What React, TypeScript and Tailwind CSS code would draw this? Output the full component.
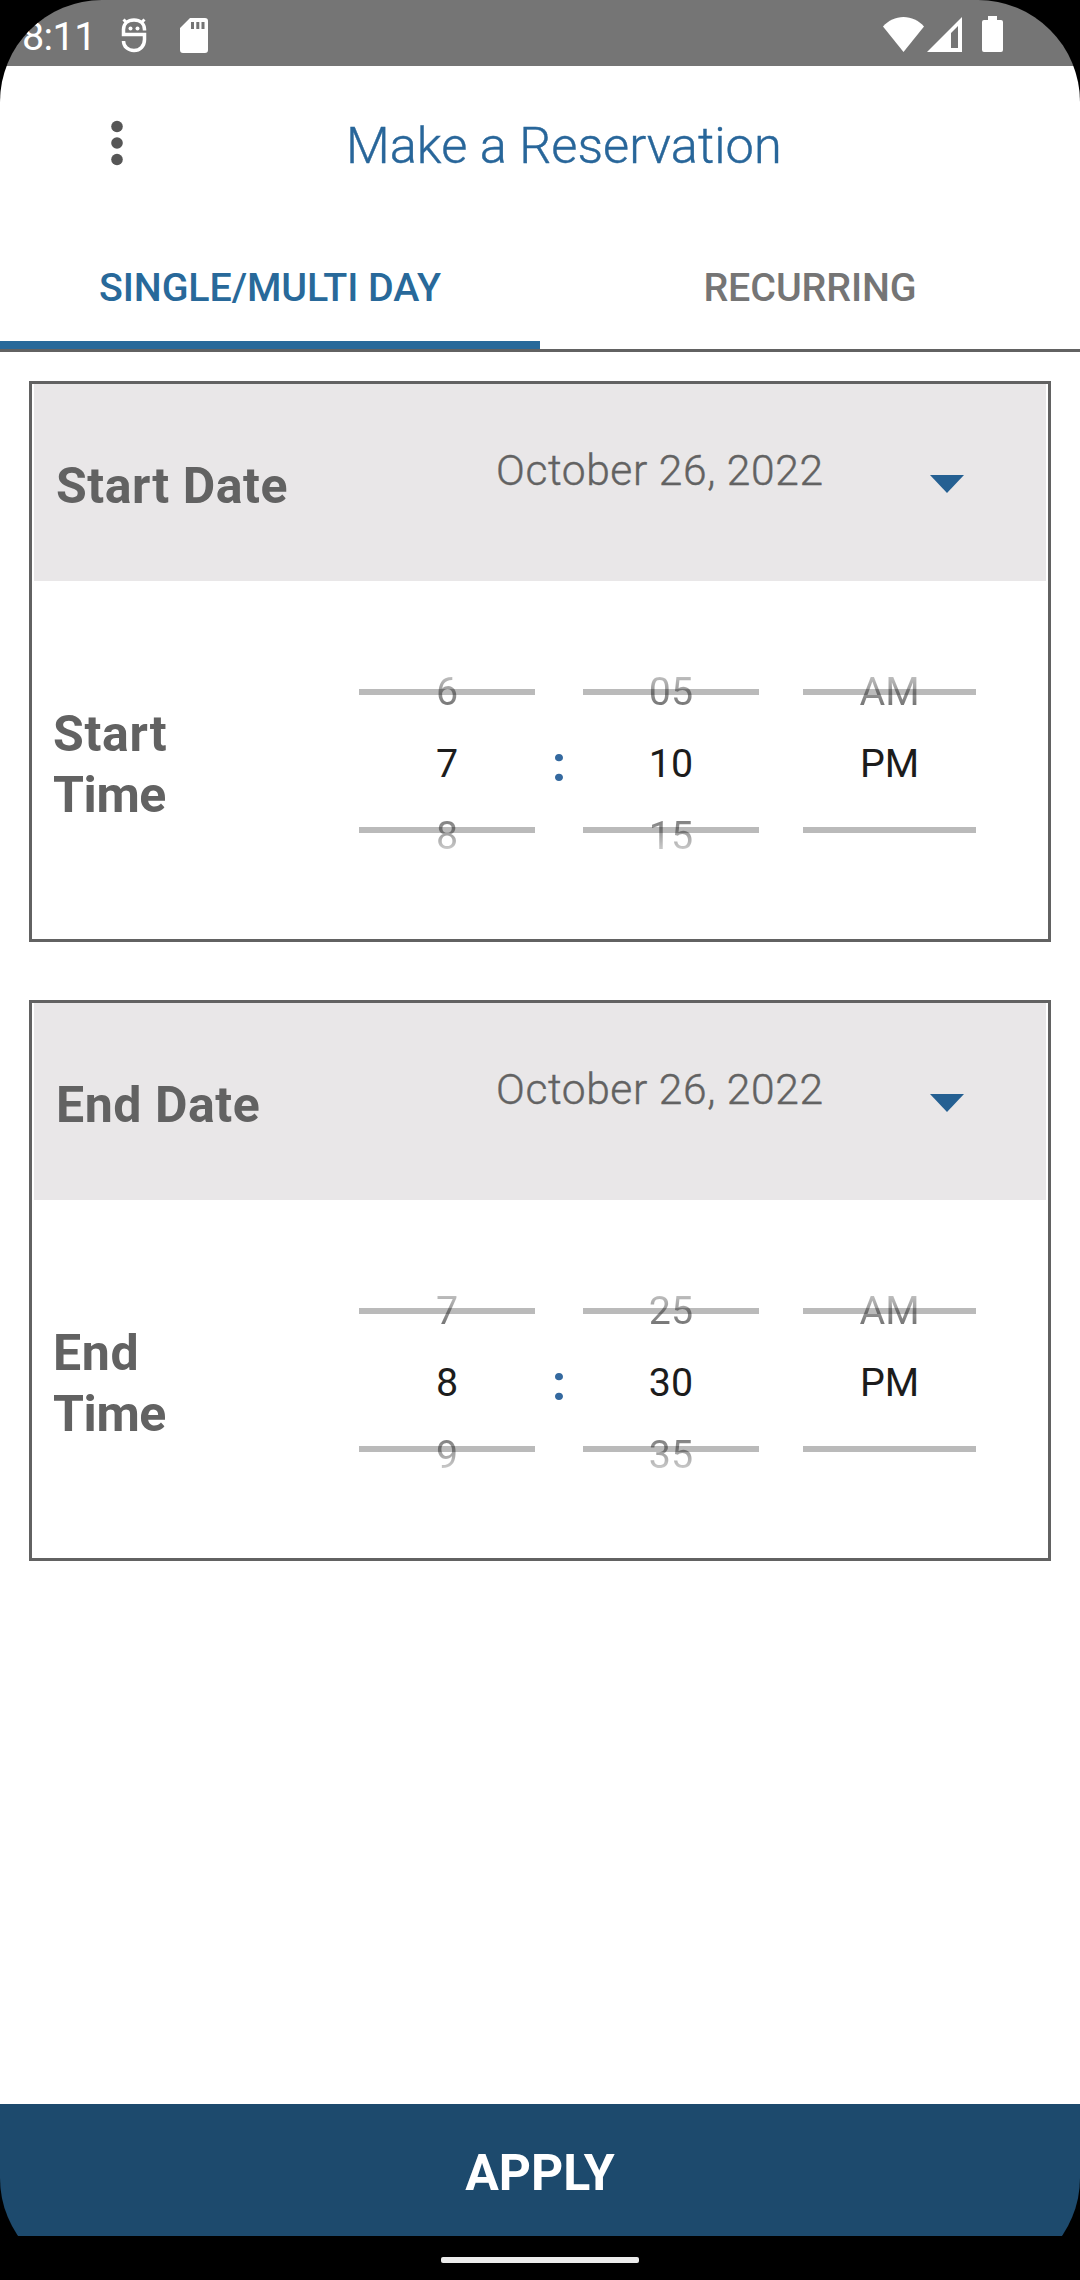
import clsx from "clsx";

const DebugIcon = () => (
  <svg width="26" height="36" viewBox="0 0 26 36" fill="none" stroke="#fff" strokeWidth="3.5">
    <path d="M23.500 13.500V12.500C23.500 6.500 19 3 13 3S2.500 6.500 2.500 12.500V17.500H23.500V22.500C23.500 29 19 33.500 13 33.500S2.500 29.500 2.500 24" />
    <path d="M2.500 2.500 6 6M23.500 2.500 20 6" strokeWidth="3" />
    <circle cx="9.500" cy="11.500" r="2" fill="#fff" stroke="none" />
    <circle cx="16.500" cy="11.500" r="2" fill="#fff" stroke="none" />
  </svg>
);

const SdCardIcon = () => (
  <svg width="28" height="35" viewBox="0 0 28 35">
    <path
      fill="#fff"
      fillRule="evenodd"
      d="M10 0H25a3 3 0 0 1 3 3V32a3 3 0 0 1-3 3H3a3 3 0 0 1-3-3V10ZM11 4v7h3V4ZM16.300 4v7h3V4ZM21.500 4v7h3V4Z"
    />
  </svg>
);

const WifiIcon = () => (
  <svg width="41" height="35" viewBox="0 0 41 35" fill="#fff">
    <path d="M20.500 35 0 9.500C5.500 3.500 12.500 0 20.500 0S35.500 3.500 41 9.500Z" />
  </svg>
);

const SignalIcon = () => (
  <svg width="35" height="35" viewBox="0 0 35 35" fill="#fff" fillRule="evenodd">
    <path d="M35 0V35H0ZM31 9 24 16V31H31Z" />
  </svg>
);

const BatteryIcon = () => (
  <svg width="21" height="36" viewBox="0 0 21 36" fill="#fff">
    <path d="M6 0h9v4h4a2 2 0 0 1 2 2v28a2 2 0 0 1-2 2H2a2 2 0 0 1-2-2V6a2 2 0 0 1 2-2h4Z" />
  </svg>
);

const StatusBar = () => (
  <div className="flex h-[66px] justify-between bg-[#757575] pr-[77px] pl-[22px] text-white">
    <div className="flex items-start">
      <span className="mt-[7px] w-[99px] text-[39.500px] leading-[60px] tracking-[-0.600px]">8:11</span>
      <div className="mt-[17px] mr-[33px]">
        <DebugIcon />
      </div>
      <div className="mt-[18px]">
        <SdCardIcon />
      </div>
    </div>
    <div className="flex items-start pt-[17px]">
      <WifiIcon />
      <div className="mr-[20px] ml-[3px]">
        <SignalIcon />
      </div>
      <div className="-mt-px">
        <BatteryIcon />
      </div>
    </div>
  </div>
);

const Wheel = ({ values, className }: any) => (
  <div className={clsx("relative flex h-[216px] flex-col text-center text-[39.400px] leading-[72px]", className)}>
    <div className="absolute top-[33px] h-[6px] w-full bg-[#bababa]" />
    <div className="absolute top-[171px] h-[6px] w-full bg-[#bababa]" />
    <div className="relative h-[72px] bg-linear-to-b from-black/25 from-[28%] to-black/55 to-[70%] bg-clip-text text-transparent">
      {values[0]}
    </div>
    <div className="h-[72px] text-[#1c1c1c]">{values[1]}</div>
    <div className="relative h-[72px] bg-linear-to-b from-black/50 from-[28%] to-black/20 to-[70%] bg-clip-text text-transparent">
      {values[2]}
    </div>
  </div>
);

const DateTimeCard = ({ label, date, hours, minutes, periods }: any) => (
  <section className="h-[561px] border-[3px] border-[#626262] text-[#626262]">
    <div className="mx-[2px] flex h-[197px] items-start bg-[#e9e7e8]">
      <h2 className="mt-[72px] ml-[22px] w-[440px] text-[50px] leading-[60px] font-bold tracking-[0.550px]">
        {label} Date
      </h2>
      <span className="mt-[57px] w-[434px] text-[42.500px] leading-[60px] font-light tracking-[0.600px] whitespace-nowrap [-webkit-text-stroke:0.4px]">
        {date}
      </span>
      <svg width="34" height="18" viewBox="0 0 34 18" className="mt-[91px]">
        <path d="M0 0H34L17 18Z" fill="#256092" />
      </svg>
    </div>
    <div className="flex h-[358px] items-center pt-[8px]">
      <h2 className="mt-[2px] ml-[21px] w-[306px] text-[50px] leading-[61px] font-bold">
        <span className="block tracking-[0.700px]">{label}</span>
        <span className="block tracking-[-0.400px]">Time</span>
      </h2>
      <Wheel values={hours} className="w-[176px]" />
      <span className="w-[48px] text-center text-[50px] leading-[60px] font-bold text-[#34699f]">:</span>
      <Wheel values={minutes} className="w-[176px]" />
      <Wheel values={periods} className="ml-[44px] w-[173px]" />
    </div>
  </section>
);

const App = () => (
  <div className="h-[2280px] w-[1080px] bg-black">
    <div className="flex h-full flex-col overflow-hidden rounded-[102px] font-['Roboto',sans-serif]">
      <StatusBar />
      <header className="flex h-[158px] items-center bg-white">
        <svg width="12" height="46" viewBox="0 0 12 46" fill="#565656" className="mb-[5px] ml-[111px]">
          <circle cx="6" cy="6.500" r="5.800" />
          <circle cx="6" cy="23" r="5.800" />
          <circle cx="6" cy="39.500" r="5.800" />
        </svg>
        <h1 className="mt-px ml-[223px] text-[50.500px] leading-[60px] font-light tracking-[0.050px] text-[#28669a] [-webkit-text-stroke:0.4px]">
          Make a Reservation
        </h1>
      </header>
      <nav className="flex h-[128px] border-b-[3px] border-[#626262] bg-white text-center text-[39.400px] font-medium tracking-[-0.100px]">
        <div className="w-1/2 border-b-[8px] border-[#28699a] pt-[34px] leading-[60px] text-[#28699a]">
          SINGLE/MULTI DAY
        </div>
        <div className="w-1/2 pt-[34px] leading-[60px] text-[#757575]">RECURRING</div>
      </nav>
      <main className="flex flex-1 flex-col gap-[58px] bg-white px-[29px] pt-[29px]">
        <DateTimeCard
          label="Start"
          date="October 26, 2022"
          hours={["6", "7", "8"]}
          minutes={["05", "10", "15"]}
          periods={["AM", "PM", ""]}
        />
        <DateTimeCard
          label="End"
          date="October 26, 2022"
          hours={["7", "8", "9"]}
          minutes={["25", "30", "35"]}
          periods={["AM", "PM", ""]}
        />
      </main>
      <button className="h-[132px] bg-[#1d4a6d] pt-[6px] text-[50px] leading-[60px] font-bold text-white">
        APPLY
      </button>
      <div className="flex h-[44px] justify-center bg-black pt-[21px]">
        <div className="h-[6px] w-[198px] rounded-[2px] bg-[#ebebeb]" />
      </div>
    </div>
  </div>
);

export default App;
